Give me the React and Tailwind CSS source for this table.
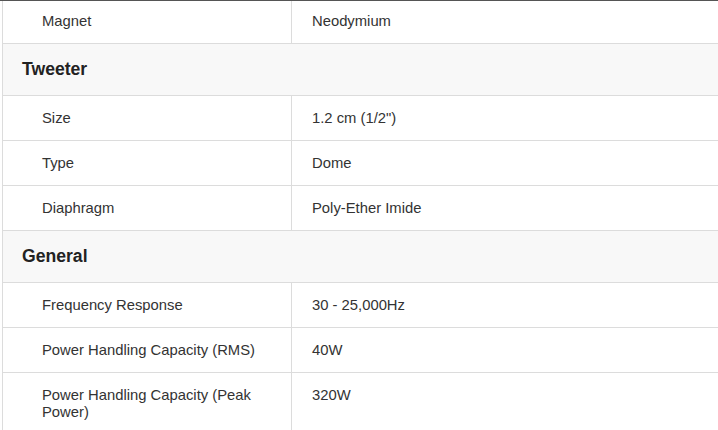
import React from "react";

const font = { fontFamily: '"Liberation Sans", Arial, sans-serif' };

const sections = [
  { rows: [["Magnet", "Neodymium"]], first: true },
  {
    title: "Tweeter",
    rows: [
      ["Size", '1.2 cm (1/2")'],
      ["Type", "Dome"],
      ["Diaphragm", "Poly-Ether Imide"],
    ],
  },
  {
    title: "General",
    rows: [
      ["Frequency Response", "30 - 25,000Hz"],
      ["Power Handling Capacity (RMS)", "40W"],
      ["Power Handling Capacity (Peak Power)", "320W"],
    ],
  },
];

const SpecRow = ({ label, value, first }) => (
  <div className="grid grid-cols-[289px_1fr] border-b border-[#dcdcdc]">
    <div
      className={`pl-[39px] pr-[20px] border-r border-[#dcdcdc] leading-[17px] ${
        first ? "pt-[12px] pb-[13px]" : "pt-[14px] pb-[13px]"
      }`}
    >
      {label}
    </div>
    <div
      className={`pl-[20px] pr-[20px] leading-[17px] ${
        first ? "pt-[12px] pb-[13px]" : "pt-[14px] pb-[13px]"
      }`}
    >
      {value}
    </div>
  </div>
);

export default function App() {
  return (
    <div style={font} className="w-[718px] h-[430px] overflow-hidden bg-white">
      <div className="h-px bg-[#555]" />
      <div className="ml-[2px] w-[730px] border-l border-[#dcdcdc] text-[14.8px] text-[#333]">
        {sections.map((s, i) => (
          <div key={i}>
            {s.title && (
              <div className="bg-[#f8f8f8] border-b border-[#dcdcdc] px-[19px] h-[52px] flex items-center text-[17.6px] font-bold text-[#222]">
                {s.title}
              </div>
            )}
            {s.rows.map(([l, v]) => (
              <SpecRow key={l} label={l} value={v} first={s.first} />
            ))}
          </div>
        ))}
      </div>
    </div>
  );
}
